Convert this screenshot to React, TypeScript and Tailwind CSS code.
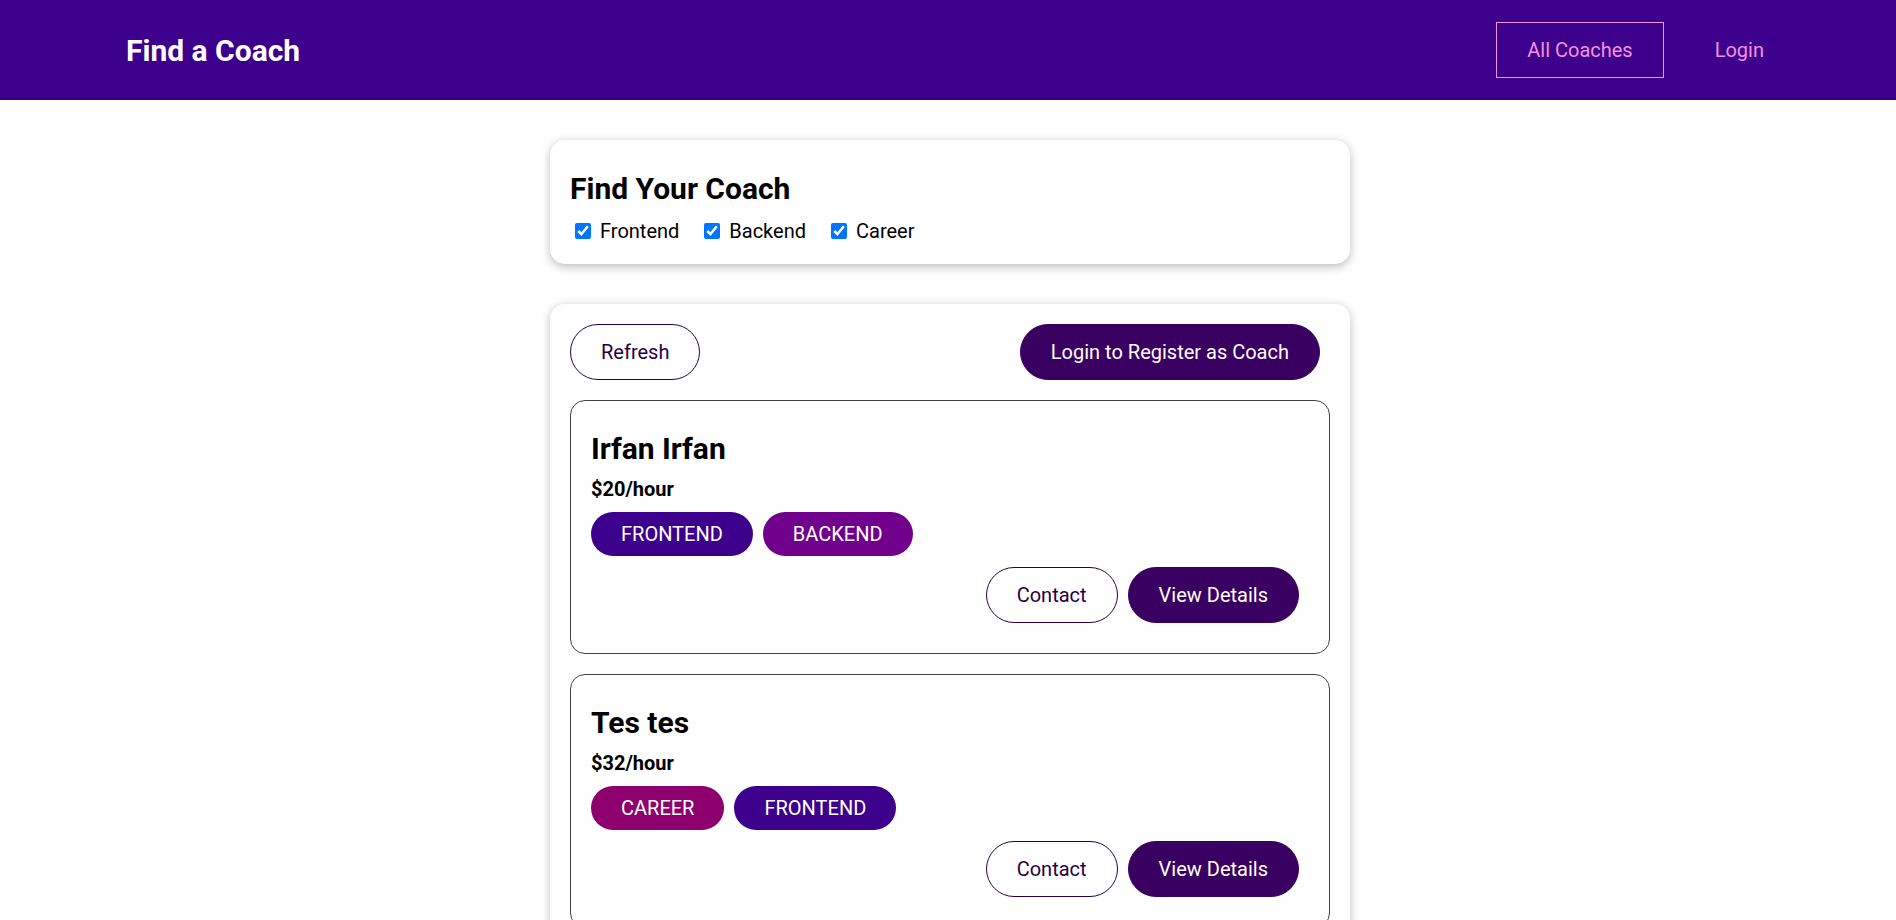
const areaColors: Record<string, string> = {
  frontend: "bg-[#3d008d]",
  backend: "bg-[#71008d]",
  career: "bg-[#8d006e]",
};

const coaches = [
  { id: "c1", name: "Irfan Irfan", rate: 20, areas: ["frontend", "backend"] },
  { id: "c2", name: "Tes tes", rate: 32, areas: ["career", "frontend"] },
];

const filters = [
  { id: "frontend", label: "Frontend" },
  { id: "backend", label: "Backend" },
  { id: "career", label: "Career" },
];

function Button({ children, outline }: { children: React.ReactNode; outline?: boolean }) {
  return (
    <button
      className={
        outline
          ? "inline-block rounded-[37.5px] border border-[#270041] bg-transparent px-[30px] py-[15px] mr-[10px] text-[#270041] cursor-pointer"
          : "inline-block rounded-[37.5px] border border-[#3a0061] bg-[#3a0061] px-[30px] py-[15px] mr-[10px] text-white cursor-pointer"
      }
    >
      {children}
    </button>
  );
}

function CoachItem({ coach }: { coach: (typeof coaches)[0] }) {
  return (
    <li className="my-[20px] rounded-[15px] border border-[#424242] p-[20px]">
      <h3 className="my-[10px] text-[30px] font-bold">{coach.name}</h3>
      <h4 className="mt-[11px] mb-[10px] text-[20px] font-bold">${coach.rate}/hour</h4>
      <div className="my-[11px]">
        {coach.areas.map((a) => (
          <span
            key={a}
            className={`inline-block rounded-[37.5px] px-[30px] py-[10px] mr-[10px] text-white ${areaColors[a]}`}
          >
            {a.toUpperCase()}
          </span>
        ))}
      </div>
      <div className="my-[10px] flex justify-end">
        <Button outline>Contact</Button>
        <Button>View Details</Button>
      </div>
    </li>
  );
}

export default function App() {
  return (
    <div className="min-h-screen overflow-x-hidden bg-white">
      <div className="w-[1900px] font-['Roboto',sans-serif] text-[20px] leading-[normal] text-black">
        <header className="flex h-[100px] w-full items-center justify-center bg-[#3d008d]">
          <nav className="mx-auto flex w-[90%] items-center justify-between">
            <h1 className="m-0">
              <a className="inline-block border border-transparent px-[30px] py-[15px] text-[30px] font-bold text-white">
                Find a Coach
              </a>
            </h1>
            <ul className="flex items-center">
              <li className="mx-[10px]">
                <a className="inline-block border border-[#f391e3] px-[30px] py-[15px] text-[#f391e3]">
                  All Coaches
                </a>
              </li>
              <li className="mx-[10px]">
                <a className="inline-block border border-transparent px-[30px] py-[15px] text-[#f391e3]">
                  Login
                </a>
              </li>
            </ul>
          </nav>
        </header>

        <section>
          <div className="mx-auto my-[40px] max-w-[800px] rounded-[15px] bg-white px-[20px] pt-[20px] pb-[21px] shadow-[0_2.5px_10px_rgba(0,0,0,0.26)]">
            <h2 className="my-[11px] text-[30px] font-bold">Find Your Coach</h2>
            {filters.map((f) => (
              <span key={f.id} className="mr-[20px]">
                <input
                  type="checkbox"
                  id={f.id}
                  defaultChecked
                  className="ml-[5px] mr-[4px] my-[4px] h-[16px] w-[16px] align-middle"
                />
                <label htmlFor={f.id} className="ml-[5px] align-middle">
                  {f.label}
                </label>
              </span>
            ))}
          </div>
        </section>

        <section>
          <div className="mx-auto my-[40px] max-w-[800px] rounded-[15px] bg-white p-[20px] shadow-[0_2.5px_10px_rgba(0,0,0,0.26)]">
            <div className="flex justify-between">
              <Button outline>Refresh</Button>
              <Button>Login to Register as Coach</Button>
            </div>
            <ul>
              {coaches.map((c) => (
                <CoachItem key={c.id} coach={c} />
              ))}
            </ul>
          </div>
        </section>
      </div>
    </div>
  );
}
